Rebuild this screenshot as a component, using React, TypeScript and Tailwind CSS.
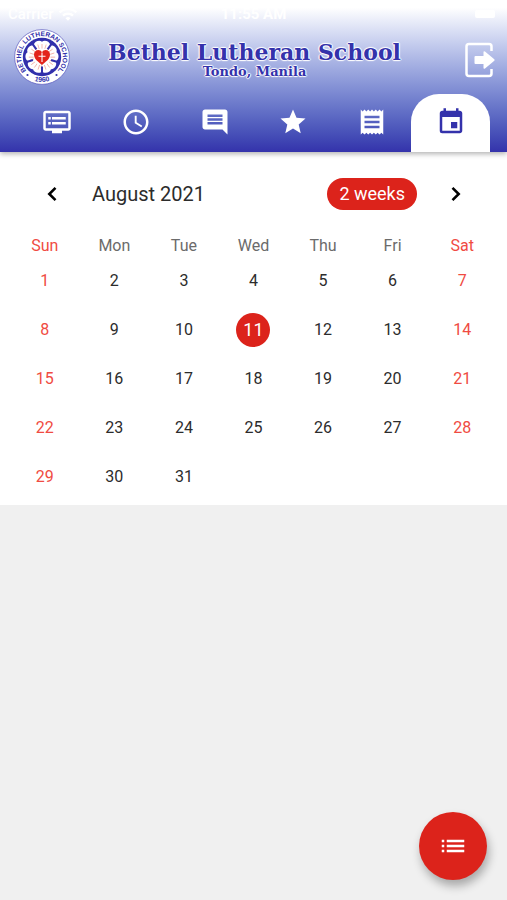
import React, { useState } from "react";
import {
  MdAccessTime,
  MdComment,
  MdDvr,
  MdEvent,
  MdList,
  MdReceipt,
  MdStar,
  MdWifi,
} from "react-icons/md";

const tabs = [
  { label: "Board", Icon: MdDvr },
  { label: "Schedule", Icon: MdAccessTime },
  { label: "Messages", Icon: MdComment },
  { label: "Grades", Icon: MdStar },
  { label: "Billing", Icon: MdReceipt },
  { label: "Calendar", Icon: MdEvent },
];

const weekdays = ["Sun", "Mon", "Tue", "Wed", "Thu", "Fri", "Sat"];

const weeks: (number | null)[][] = [
  [1, 2, 3, 4, 5, 6, 7],
  [8, 9, 10, 11, 12, 13, 14],
  [15, 16, 17, 18, 19, 20, 21],
  [22, 23, 24, 25, 26, 27, 28],
  [29, 30, 31, null, null, null, null],
];

const petalAngles = [0, 72, 144, 216, 288];

function SchoolSeal() {
  return (
    <svg viewBox="0 0 56 56" className="size-14 shrink-0" role="img" aria-label="Bethel Lutheran School seal">
      <defs>
        <path id="seal-top" d="M 11.8 41 A 20.800 20.800 0 1 1 44.2 41" />
        <path id="seal-bottom" d="M 14 48.8 A 25.200 25.200 0 0 0 42 48.8" />
      </defs>
      <circle cx="28" cy="28" r="27.4" fill="#fff" stroke="#5a59bd" strokeWidth="0.7" />
      <circle cx="28" cy="28" r="19.2" fill="#3130ab" />
      {petalAngles.map((a) => (
        <g key={a} transform={`rotate(${a} 28 28)`}>
          <path
            d="M28 29 C25 26 18.400 21 19.600 16 C20.600 12.200 25.500 10.600 28 12.800 C30.500 10.600 35.400 12.200 36.400 16 C37.600 21 31 26 28 29Z"
            fill="#fff"
          />
          <path
            d="M28 24V15M26.500 24L23.800 15.500M29.500 24L32.200 15.500M25 23L21.600 18M31 23L34.400 18"
            stroke="#f3b3a8"
            strokeWidth="0.9"
          />
        </g>
      ))}
      <circle cx="28" cy="28" r="8.500" fill="#fff" />
      {petalAngles.map((a) => (
        <path key={a} d="M28 46V37.500" transform={`rotate(${a} 28 28)`} stroke="#3130ab" strokeWidth="2" />
      ))}
      <path
        d="M28 36 C24 32.500 20 30 20 25.500 C20 20.800 26 19.500 28 23.200 C30 19.500 36 20.800 36 25.500 C36 30 32 32.500 28 36Z"
        fill="#e3231b"
      />
      <path d="M28 23.500V33M24.500 27.300H31.500" stroke="#fff" strokeWidth="1.100" />
      <text fill="#3130ab" fontSize="6.600" fontWeight="700" fontFamily="Liberation Sans, sans-serif">
        <textPath href="#seal-top" startOffset="50%" textAnchor="middle">
          BETHEL LUTHERAN SCHOOL
        </textPath>
      </text>
      <text fill="#3130ab" fontSize="7" fontWeight="700" fontFamily="Liberation Sans, sans-serif">
        <textPath href="#seal-bottom" startOffset="50%" textAnchor="middle">
          1960
        </textPath>
      </text>
      <circle cx="13.500" cy="46" r="1.100" fill="#3130ab" />
      <circle cx="42.500" cy="46" r="1.100" fill="#3130ab" />
    </svg>
  );
}

function ExitIcon() {
  return (
    <svg viewBox="0 0 30 36" className="h-9 w-[30px]" aria-hidden="true">
      <path
        d="M26.500 9V4.500Q26.500 2 24 2H4Q1.500 2 1.500 4.500V31.500Q1.500 34 4 34H24Q26.500 34 26.500 31.500V27"
        fill="none"
        stroke="#fff"
        strokeWidth="2.500"
      />
      <path
        d="M10.500 14H18.500V10.200Q18.500 8.500 20 9.600L29.300 17.200Q30 18 29.300 18.800L20 26.400Q18.500 27.500 18.500 25.800V22H10.500Q9.500 22 9.500 21V15Q9.500 14 10.500 14Z"
        fill="#fff"
      />
    </svg>
  );
}

function Chevron({ direction }: { direction: "left" | "right" }) {
  return (
    <svg viewBox="0 0 28 28" className="size-7" fill="none" stroke="currentColor" strokeWidth="2.600" aria-hidden="true">
      <path d={direction === "left" ? "M17.500 7.800L11.300 14L17.500 20.200" : "M11.500 7.800L17.700 14L11.500 20.200"} />
    </svg>
  );
}

function Header() {
  const [active, setActive] = useState("Calendar");
  return (
    <header className="relative flex flex-col bg-linear-to-b from-white from-5% to-[#3432ab] shadow-[0_2px_5px_rgba(0,0,0,0.3)]">
      <div className="grid h-7 grid-cols-3 items-center px-2 text-[15px] font-medium text-white">
        <span className="flex items-center gap-1">
          Carrier
          <MdWifi className="size-5" aria-hidden="true" />
        </span>
        <span className="text-center font-bold">11:55 AM</span>
        <span className="mr-1 h-2 w-5 justify-self-end rounded-xs bg-white" />
      </div>
      <div className="grid h-[66px] grid-cols-[56px_1fr_56px] items-start pr-3 pl-[14px]">
        <div className="flex pt-px">
          <SchoolSeal />
        </div>
        <div className="flex flex-col items-center pt-3 font-['DejaVu_Serif','Liberation_Serif',serif] font-bold text-[#3432ab] [text-shadow:1px_0_1px_#fff,-1px_0_1px_#fff,0_1px_1px_#fff,0_-1px_1px_#fff,0_0_2px_#fff]">
          <h1 className="text-[22px] leading-6">Bethel Lutheran School</h1>
          <p className="text-[13px] leading-4">Tondo, Manila</p>
        </div>
        <button type="button" aria-label="Log out" className="flex justify-self-end pt-[14px]">
          <ExitIcon />
        </button>
      </div>
      <nav className="flex pr-[17px] pl-[18px]">
        {tabs.map(({ label, Icon }) => (
          <button
            key={label}
            type="button"
            aria-label={label}
            onClick={() => setActive(label)}
            className={
              active === label
                ? "flex h-[58px] flex-1 items-center justify-center rounded-t-[28px] bg-white pb-[2px] text-[#3432ab]"
                : "flex h-[58px] flex-1 items-center justify-center pb-[2px] text-white"
            }
          >
            <Icon className="size-[30px]" />
          </button>
        ))}
      </nav>
    </header>
  );
}

function Calendar() {
  const [selected, setSelected] = useState(11);
  return (
    <section className="bg-white px-[10px] pt-5 pb-1">
      <div className="flex h-[44px] items-center px-7 text-[#2c2c2c]">
        <button type="button" aria-label="Previous month" className="flex text-black">
          <Chevron direction="left" />
        </button>
        <h2 className="flex-1 pl-[26px] text-xl">August 2021</h2>
        <button type="button" className="mr-6 h-8 rounded-full bg-[#dc231b] px-3 text-lg leading-8 text-white">
          2 weeks
        </button>
        <button type="button" aria-label="Next month" className="flex text-black">
          <Chevron direction="right" />
        </button>
      </div>
      <table className="mt-5 w-full table-fixed text-center">
        <thead>
          <tr>
            {weekdays.map((d, i) => (
              <th
                key={d}
                scope="col"
                className={
                  i === 0 || i === 6
                    ? "h-5 p-0 text-base leading-5 font-normal text-[#f04b42]"
                    : "h-5 p-0 text-base leading-5 font-normal text-[#6b6b6b]"
                }
              >
                {d}
              </th>
            ))}
          </tr>
        </thead>
        <tbody>
          {weeks.map((week, r) => (
            <tr key={r}>
              {week.map((day, i) => (
                <td key={i} className="h-[49px] p-0">
                  {day !== null && (
                    <button
                      type="button"
                      onClick={() => setSelected(day)}
                      className={
                        day === selected
                          ? "inline-flex size-[34px] items-center justify-center rounded-full bg-[#dc231b] align-middle text-lg text-white"
                          : i === 0 || i === 6
                            ? "inline-flex size-[34px] items-center justify-center rounded-full align-middle text-base text-[#f04b42]"
                            : "inline-flex size-[34px] items-center justify-center rounded-full align-middle text-base text-[#2c2c2c]"
                      }
                    >
                      {day}
                    </button>
                  )}
                </td>
              ))}
            </tr>
          ))}
        </tbody>
      </table>
    </section>
  );
}

export default function App() {
  return (
    <div className="min-h-screen bg-[#f0f0f0] font-['Roboto','Liberation_Sans',sans-serif]">
      <Header />
      <main>
        <Calendar />
      </main>
      <button
        type="button"
        aria-label="Event list"
        className="fixed right-5 bottom-5 flex size-[68px] items-center justify-center rounded-full bg-[#dc231b] text-white shadow-[2px_6px_10px_rgba(0,0,0,0.3)]"
      >
        <MdList className="size-[30px]" />
      </button>
    </div>
  );
}
